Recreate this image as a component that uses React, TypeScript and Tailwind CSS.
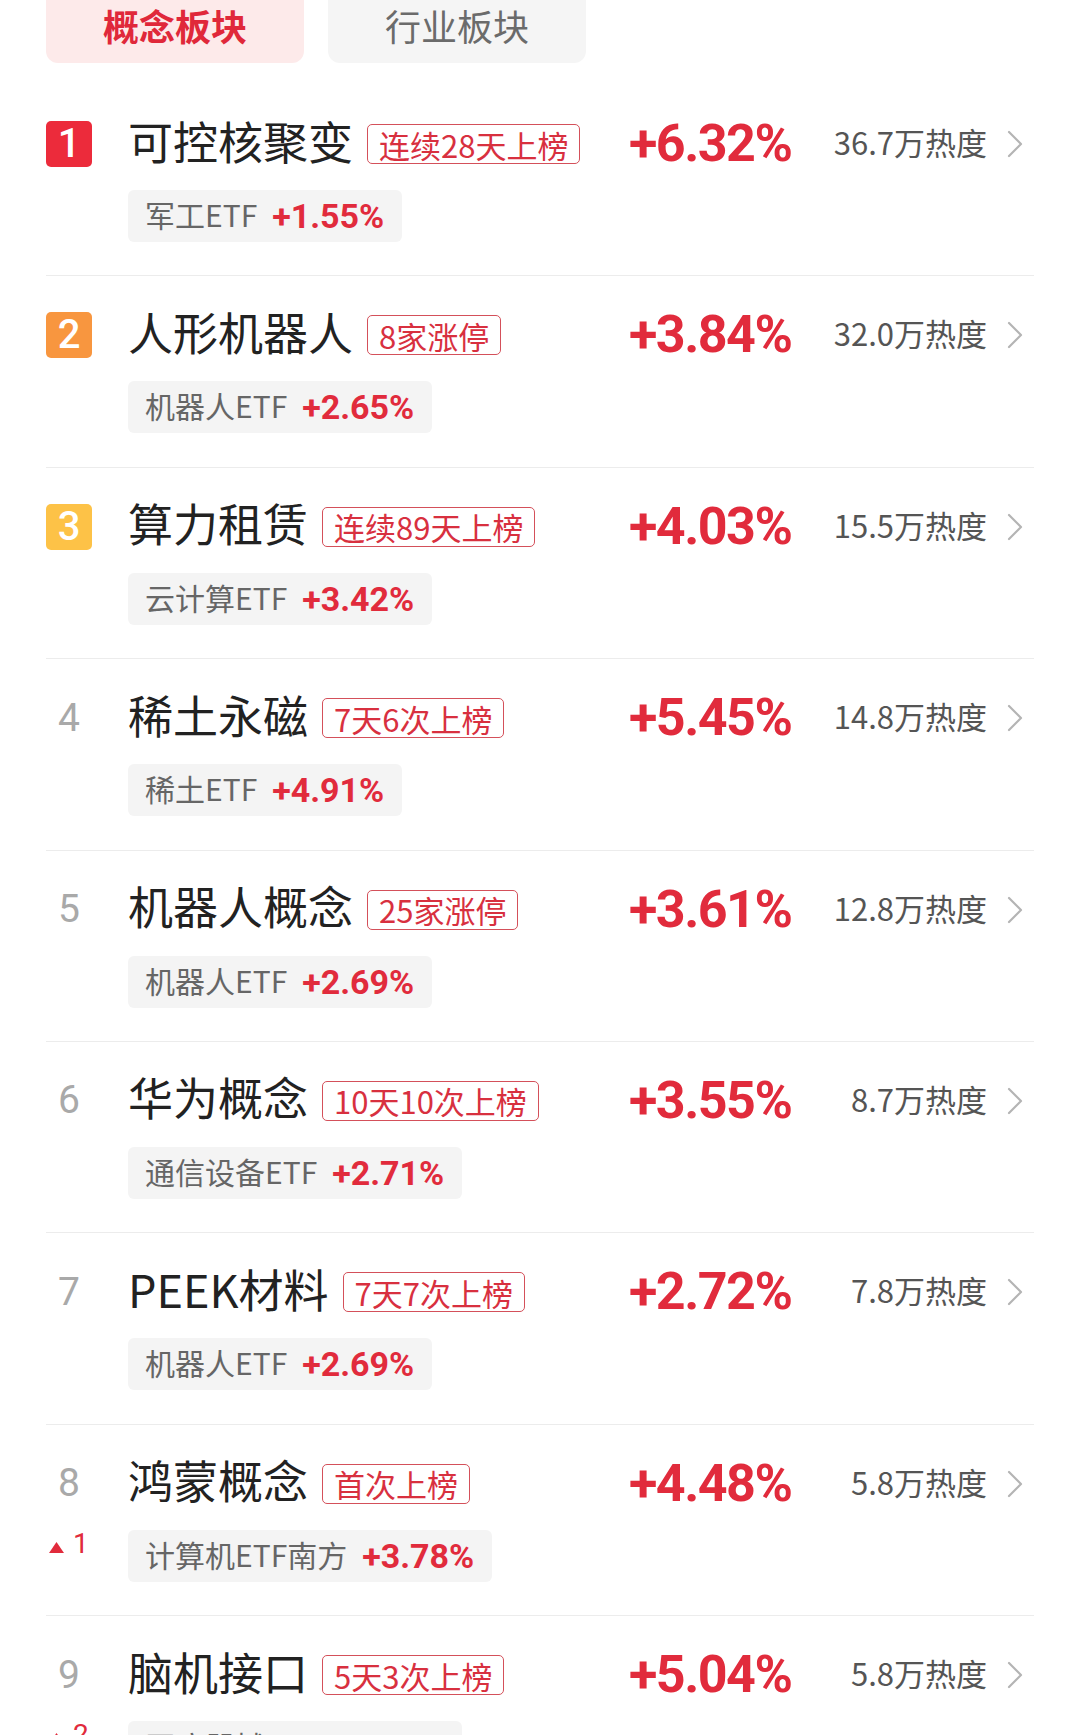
import React from "react";

const RED = "#e12b3c";
const CJK = "font-['Noto_Sans_CJK_SC',sans-serif]";
const NUM = "font-['Roboto','Noto_Sans_CJK_SC',sans-serif]";

type Row = {
  rank: number;
  name: string;
  tag: string;
  pct: string;
  heat: string;
  etf: string;
  etfPct: string;
  move?: number;
};

const rows: Row[] = [
  { rank: 1, name: "可控核聚变", tag: "连续28天上榜", pct: "+6.32%", heat: "36.7万热度", etf: "军工ETF", etfPct: "+1.55%" },
  { rank: 2, name: "人形机器人", tag: "8家涨停", pct: "+3.84%", heat: "32.0万热度", etf: "机器人ETF", etfPct: "+2.65%" },
  { rank: 3, name: "算力租赁", tag: "连续89天上榜", pct: "+4.03%", heat: "15.5万热度", etf: "云计算ETF", etfPct: "+3.42%" },
  { rank: 4, name: "稀土永磁", tag: "7天6次上榜", pct: "+5.45%", heat: "14.8万热度", etf: "稀土ETF", etfPct: "+4.91%" },
  { rank: 5, name: "机器人概念", tag: "25家涨停", pct: "+3.61%", heat: "12.8万热度", etf: "机器人ETF", etfPct: "+2.69%" },
  { rank: 6, name: "华为概念", tag: "10天10次上榜", pct: "+3.55%", heat: "8.7万热度", etf: "通信设备ETF", etfPct: "+2.71%" },
  { rank: 7, name: "PEEK材料", tag: "7天7次上榜", pct: "+2.72%", heat: "7.8万热度", etf: "机器人ETF", etfPct: "+2.69%" },
  { rank: 8, name: "鸿蒙概念", tag: "首次上榜", pct: "+4.48%", heat: "5.8万热度", etf: "计算机ETF南方", etfPct: "+3.78%", move: 1 },
  { rank: 9, name: "脑机接口", tag: "5天3次上榜", pct: "+5.04%", heat: "5.8万热度", etf: "医疗器械ETF", etfPct: "+2.88%", move: 2 },
];

const badgeColors: Record<number, string> = {
  1: "bg-[#ec2b3b]",
  2: "bg-[#f8963f]",
  3: "bg-[#fdc247]",
};

function RankMark({ rank }: { rank: number }) {
  if (rank <= 3) {
    return (
      <div
        className={`w-[46px] h-[46px] rounded-[5px] flex items-center justify-center text-white text-[40px] font-medium leading-none ${NUM} ${badgeColors[rank]}`}
      >
        {rank}
      </div>
    );
  }
  return (
    <div className={`w-[46px] text-center text-[39px] leading-none text-[#a9a9a9] ${NUM}`}>
      {rank}
    </div>
  );
}

function Chevron() {
  return (
    <svg width="16" height="28" viewBox="0 0 16 28" fill="none">
      <polyline points="2,2 14,14 2,26" stroke="#b4b4b4" strokeWidth="2.2" strokeLinecap="round" strokeLinejoin="round" />
    </svg>
  );
}

function ListRow({ row }: { row: Row }) {
  return (
    <div className="pt-[36px] pb-[33.4px] border-b border-[#ececec] flex flex-col gap-[23px]">
      <div className="flex items-center h-[46px]">
        <div className="w-[583px] flex items-center">
          <div className="w-[82px] flex">
            <RankMark rank={row.rank} />
          </div>
          <span className={`pb-[8px] text-[45px] leading-none text-[#222] ${CJK}`}>{row.name}</span>
          <span
            className={`ml-[14px] h-[40px] px-[11px] flex items-center rounded-[5px] border-[1.5px] border-[#d4505a] text-[31px] leading-none text-[#d8303f] ${CJK}`}
          >
            {row.tag}
          </span>
        </div>
        <span className={`text-[52px] font-bold leading-none tracking-[-1.5px] ${NUM}`} style={{ color: RED }}>
          {row.pct}
        </span>
        <span className={`flex-1 pb-[5px] text-right text-[31px] leading-none text-[#555] ${CJK}`}>{row.heat}</span>
        <span className="ml-[20px] mr-[11px] flex items-center">
          <Chevron />
        </span>
      </div>
      <div className="flex items-start">
        <div className="w-[82px] flex">
          {row.move ? (
            <div className={`w-[46px] flex items-end pl-[3px] text-[28px] leading-[28px] text-[#e12b3c] ${NUM}`}>
              <svg width="15" height="11" viewBox="0 0 15 11" className="mb-[5px]">
                <polygon points="7.5,0 15,11 0,11" fill="#e12b3c" />
              </svg>
              <span className="ml-[9px]">{row.move}</span>
            </div>
          ) : null}
        </div>
        <div className="h-[52px] rounded-[6px] bg-[#f4f4f4] pl-[17px] pr-[18px] flex items-center">
          <span className={`pb-[4px] text-[30px] leading-none text-[#666] ${CJK}`}>{row.etf}</span>
          <span className={`ml-[15px] text-[34px] font-bold leading-none ${NUM}`} style={{ color: RED }}>
            {row.etfPct}
          </span>
        </div>
      </div>
    </div>
  );
}

export default function App() {
  return (
    <div className="w-[1080px] h-[1735px] overflow-hidden bg-white px-[46px]">
      <div className="flex gap-[24px]">
        <div className="w-[258px] h-[63px] rounded-b-[12px] bg-[#fdeaea] flex justify-center pt-[5px]">
          <span className={`text-[36px] leading-[40px] font-bold text-[#e0283a] ${CJK}`}>概念板块</span>
        </div>
        <div className="w-[258px] h-[63px] rounded-b-[12px] bg-[#f5f5f5] flex justify-center pt-[5px]">
          <span className={`text-[36px] leading-[40px] text-[#6b6b6b] ${CJK}`}>行业板块</span>
        </div>
      </div>
      <div className="mt-[22px]">
        {rows.map((row) => (
          <ListRow key={row.rank} row={row} />
        ))}
      </div>
    </div>
  );
}
